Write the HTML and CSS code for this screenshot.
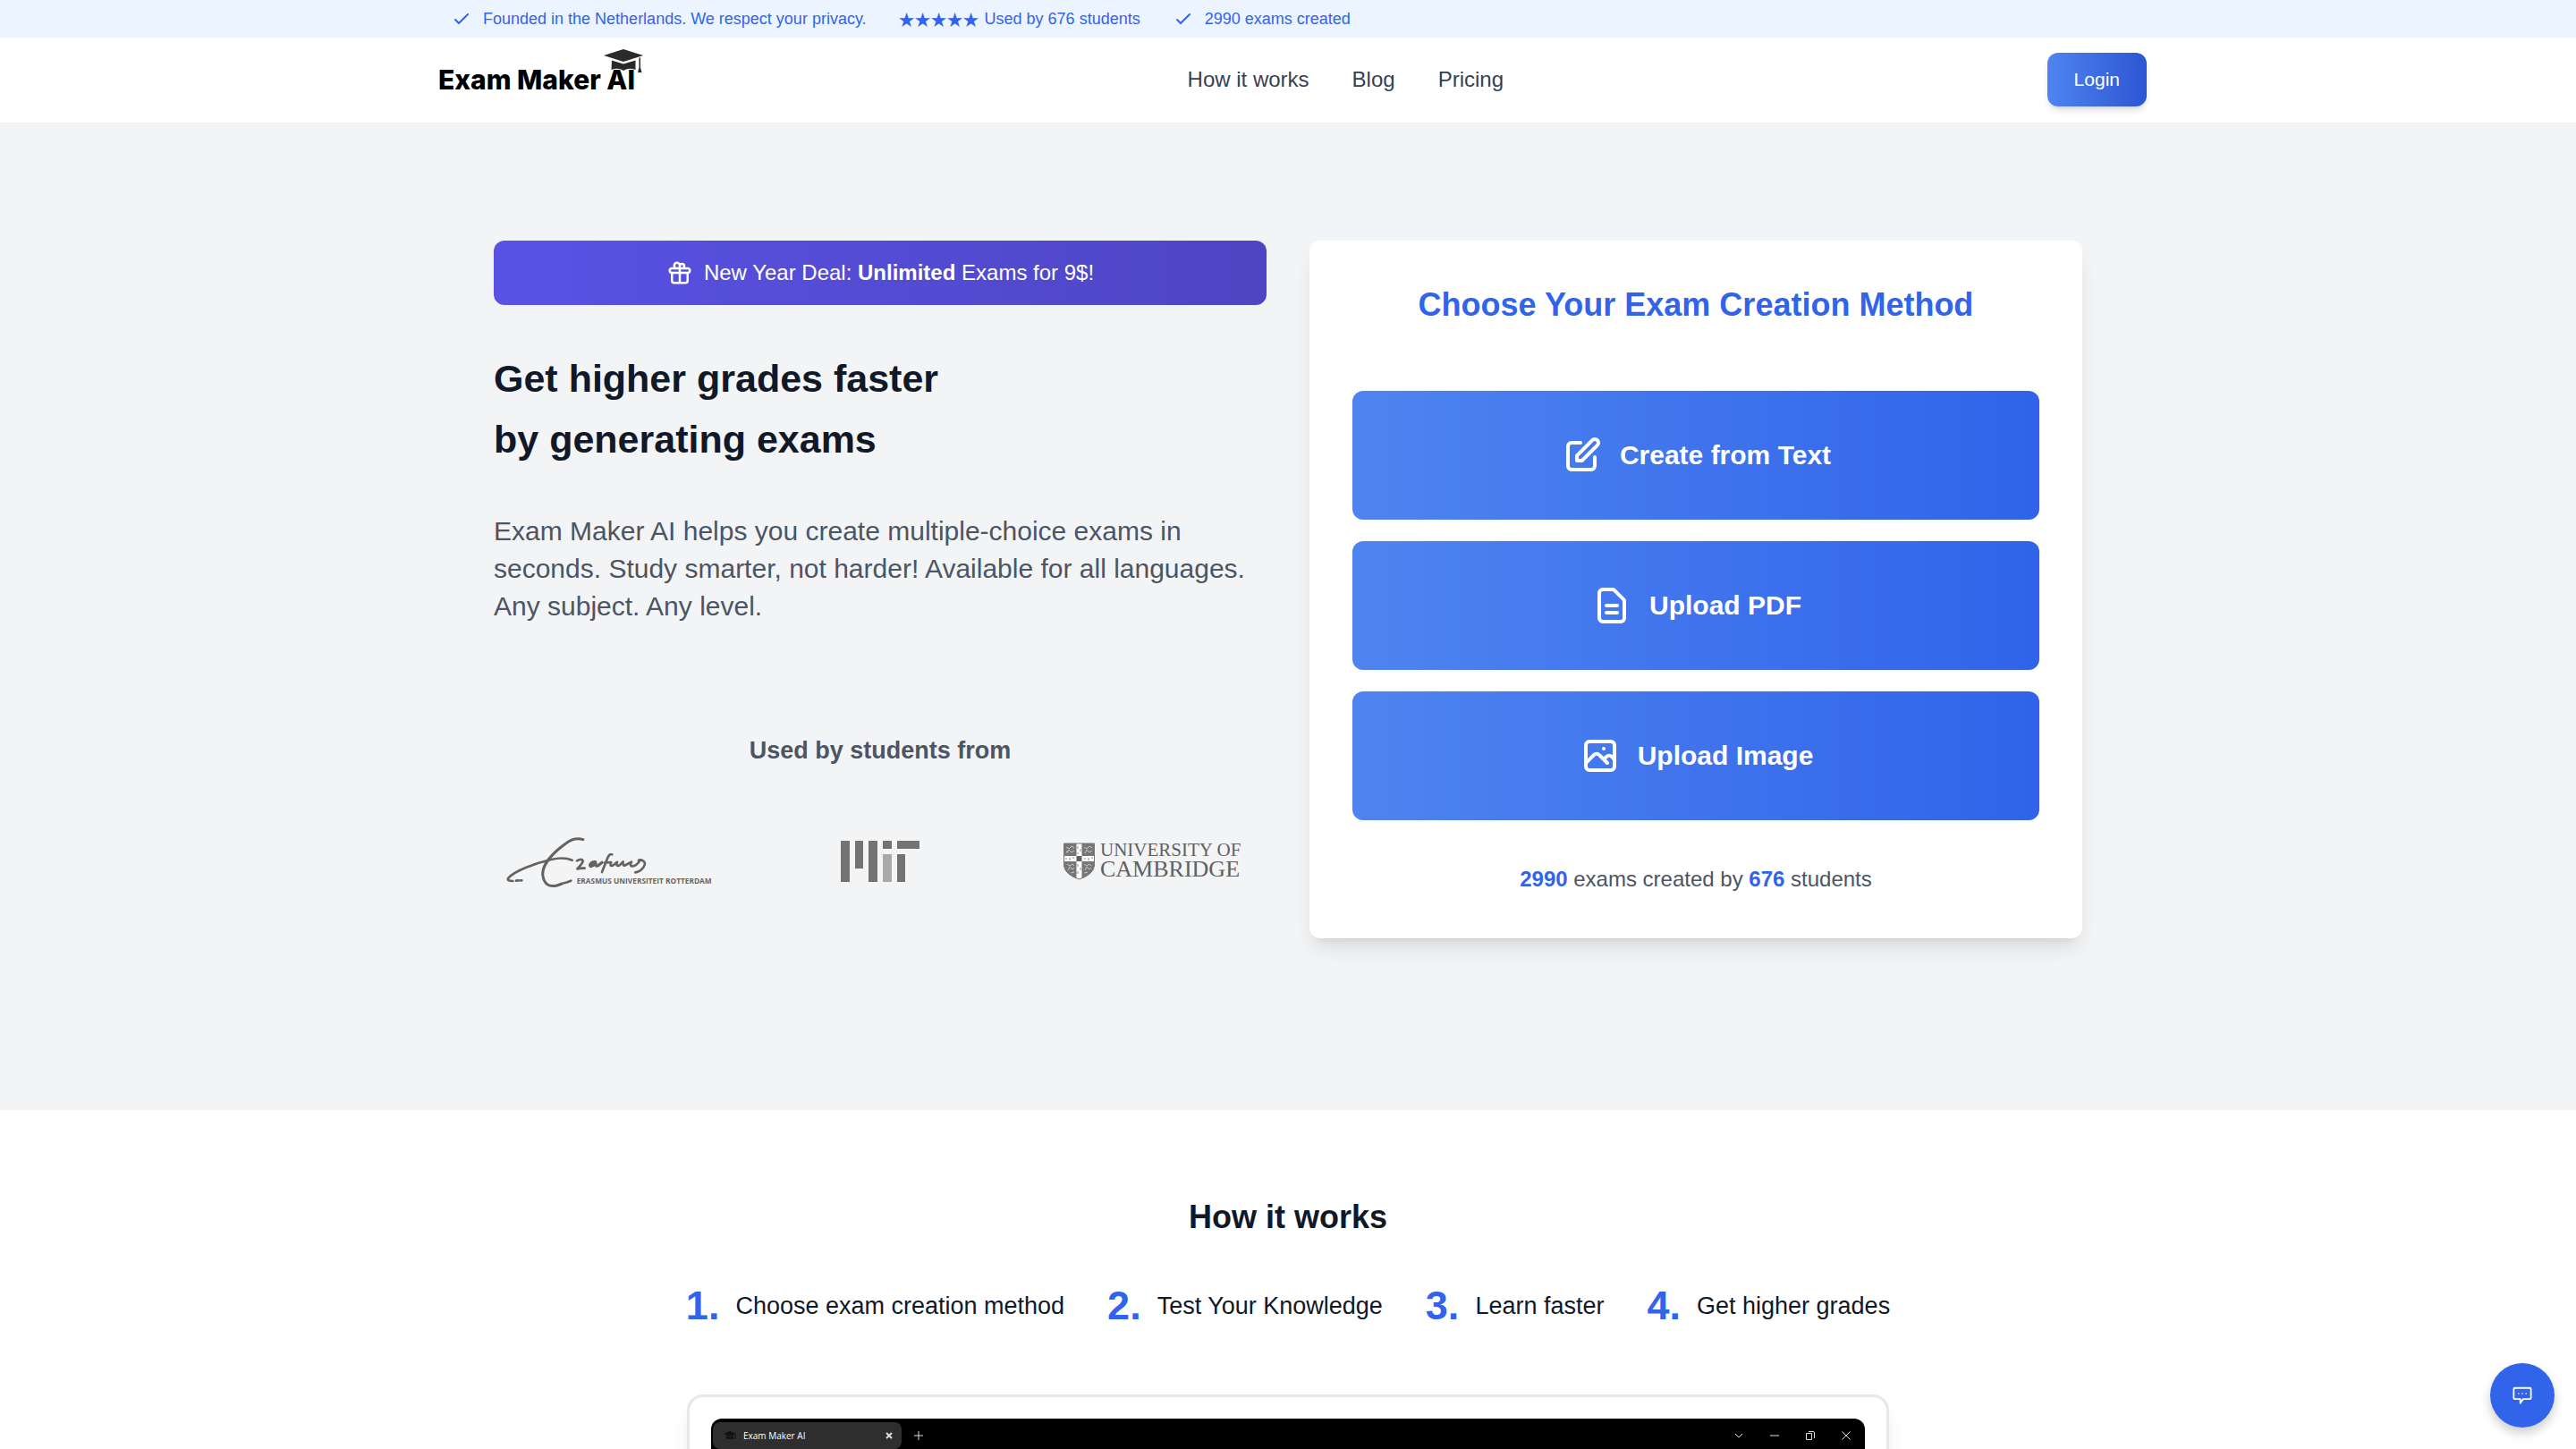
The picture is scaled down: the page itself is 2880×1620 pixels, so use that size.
FILE: index.html
```html
<!DOCTYPE html>
<html lang="en">

<head>
    <meta charset="UTF-8">
    <meta name="viewport" content="width=device-width, initial-scale=1.0">
    <title>Exam Maker AI</title>
    <link rel="stylesheet" href="styles.css">
</head>

<body>

    <div class="topbar">
        <ul class="container topbar-list">
            <li>
                <svg class="check" viewBox="0 0 24 24"><path d="M5 13l4 4L19 7" /></svg>
                Founded in the Netherlands. We respect your privacy.
            </li>
            <li class="rating"><span class="stars">★★★★★</span> Used by 676 students</li>
            <li>
                <svg class="check" viewBox="0 0 24 24"><path d="M5 13l4 4L19 7" /></svg>
                2990 exams created
            </li>
        </ul>
    </div>

    <header class="header">
        <div class="container header-row">
            <a class="logo" href="#">
                <svg viewBox="0 0 240 60" role="img" aria-label="Exam Maker AI">
                    <text x="10" y="41">Exam Maker AI</text>
                    <path class="logo-cap" d="M195 3 217 -4 239 3 217 10Z" />
                    <path class="logo-cap" d="M204 8.500 217 12.500 230.500 8.500V19Q223 16 217 20Q211 16 203.500 19Z" />
                    <path class="logo-cap" d="M234.500 5.500h1.500v11l1.500 5.500h-4.500l1.500-5.500z" />
                </svg>
            </a>
            <nav>
                <ul class="nav-list">
                    <li><a href="#how">How it works</a></li>
                    <li><a href="#">Blog</a></li>
                    <li><a href="#">Pricing</a></li>
                </ul>
            </nav>
            <button class="login" type="button">Login</button>
        </div>
    </header>

    <main>
        <section class="hero">
            <div class="container hero-grid">
                <div class="intro">
                    <a class="deal" href="#">
                        <svg class="deal-icon" viewBox="0 0 24 24"><path d="M12 8v13m0-13V6a2 2 0 112 2h-2zm0 0V5.500A2.500 2.500 0 109.500 8H12zm-7 4h14M5 12a2 2 0 110-4h14a2 2 0 110 4M5 12v7a2 2 0 002 2h10a2 2 0 002-2v-7" /></svg>
                        <span>New Year Deal: <strong>Unlimited</strong> Exams for 9$!</span>
                    </a>
                    <h1>Get higher grades faster<br>by generating exams</h1>
                    <p class="lead">Exam Maker AI helps you create multiple-choice exams in seconds. Study smarter, not harder! Available for all languages. Any subject. Any level.</p>
                    <h2 class="used-by">Used by students from</h2>
                    <div class="schools">
                        <!-- Erasmus -->
                        <svg class="erasmus" viewBox="9 24 702 180" role="img" aria-label="Erasmus Universiteit Rotterdam">
                            <g class="ink">
                                <path stroke-width="9" d="M276 41Q248 33 222 51C185 77 139 119 140 158Q146 205 188 195L205 189" />
                                <path stroke-width="8" d="M239 110Q211 98 168 108C113 121 45 146 25 170Q19 180 40 180M51 179l8-1M66 178l4 0M211 187l7-2M223 184l12-5" />
                                <path stroke-width="8" d="M255 112Q271 103 275 112Q276 119 256 139Q268 136 281 137" />
                                <path stroke-width="10" d="M317 116Q304 115 299 126Q299 137 318 121Q317 134 328 127L339 118" />
                                <path stroke-width="8" d="M339 150Q349 125 359 100Q366 87 373 91M348 119L370 117Q363 132 375 128L390 116Q384 132 397 128L410 115Q407 133 419 126L438 116Q430 132 442 130Q453 130 464 115Q457 107 473 110Q490 117 478 134Q467 149 451 151" />
                            </g>
                            <text x="254" y="189">ERASMUS UNIVERSITEIT ROTTERDAM</text>
                        </svg>
                        <!-- MIT -->
                        <svg class="mit" viewBox="0 0 88 46" role="img" aria-label="MIT">
                            <path d="M0 0h10v46H0zM16 0h9v31h-9zM31 0h10v46H31zM47 0h10v9H47zM63 0h25v9H63zM63 15h9v31h-9z" />
                            <path class="mit-light" d="M47 15h10v31H47z" />
                        </svg>
                        <!-- Cambridge -->
                        <svg class="cambridge" viewBox="-4 0 206 42" role="img" aria-label="University of Cambridge">
                            <path class="shield" d="M.500 1h34v25Q33 36 17.500 41Q2 36 .500 26Z" />
                            <path class="cross" d="M14.500 1h6v14h14v6h-14v19l-3 1-3-1V21H.500v-6h14z" />
                            <path d="M14.500 15h6v6h-6z" />
                            <path class="ermine" d="M16 4v3M19 7v3M16 11v2M16 24v3M19 28v3M16 32v3M3 17v2M7 17v3M11 16v2M24 17v2M28 17v3M32 16v2" />
                            <path class="lions" d="M3 5l3 2 3-3 3 2M4 12l2-4 3 3 3-2M3 10h2M23 5l3 2 3-3 3 2M24 12l2-4 3 3 3-2M4 24l3 2 3-2 2 2M5 31l2-4 3 3 2-2M8 34l4-1M23 24l3 2 3-2 2 2M24 31l2-4 3 3 2-2M23 34l4-1" />
                            <path class="outline" d="M.500 1h34v25Q33 36 17.500 41Q2 36 .500 26Z" />
                            <text class="cam-small" x="41" y="15">UNIVERSITY OF</text>
                            <text class="cam-big" x="41" y="38">CAMBRIDGE</text>
                        </svg>
                    </div>
                </div>

                <div class="card">
                    <h2>Choose Your Exam Creation Method</h2>
                    <div class="methods">
                        <button class="method" type="button">
                            <svg viewBox="0 0 24 24"><path d="M11 5H6a2 2 0 00-2 2v11a2 2 0 002 2h11a2 2 0 002-2v-5m-1.414-9.414a2 2 0 112.828 2.828L11.828 15H9v-2.828l8.586-8.586z" /></svg>
                            Create from Text
                        </button>
                        <button class="method" type="button">
                            <svg viewBox="0 0 24 24"><path d="M9 12h6m-6 4h6m2 5H7a2 2 0 01-2-2V5a2 2 0 012-2h5.586a1 1 0 01.707.293l5.414 5.414a1 1 0 01.293.707V19a2 2 0 01-2 2z" /></svg>
                            Upload PDF
                        </button>
                        <button class="method" type="button">
                            <svg viewBox="0 0 24 24"><path d="M4 16l4.586-4.586a2 2 0 012.828 0L16 16m-2-2l1.586-1.586a2 2 0 012.828 0L20 14m-6-6h.01M6 20h12a2 2 0 002-2V6a2 2 0 00-2-2H6a2 2 0 00-2 2v12a2 2 0 002 2z" /></svg>
                            Upload Image
                        </button>
                    </div>
                    <p class="stats"><strong>2990</strong> exams created by <strong>676</strong> students</p>
                </div>
            </div>
        </section>

        <section class="how" id="how">
            <h2>How it works</h2>
            <ol class="steps">
                <li><span class="num">1.</span>Choose exam creation method</li>
                <li><span class="num">2.</span>Test Your Knowledge</li>
                <li><span class="num">3.</span>Learn faster</li>
                <li><span class="num">4.</span>Get higher grades</li>
            </ol>
            <div class="frame">
                <div class="browser">
                    <div class="tabs">
                        <div class="tab">
                            <svg class="tab-cap" viewBox="0 0 14 10"><path d="M0 3 7 0l7 3-7 3zM3 5l4 2 4-2v4q-4-1-8 0zM12.500 4h1v5h-1z" /></svg>
                            <span class="tab-title">Exam Maker AI</span>
                            <svg class="tab-close" viewBox="0 0 8 8"><path d="M1 1l6 6M7 1L1 7" /></svg>
                        </div>
                        <svg class="tab-new" viewBox="0 0 10 10"><path d="M5 0v10M0 5h10" /></svg>
                        <div class="window-buttons">
                            <svg viewBox="0 0 10 10"><path d="M1 3l4 4 4-4" /></svg>
                            <svg viewBox="0 0 10 10"><path d="M0 5h10" /></svg>
                            <svg viewBox="0 0 10 10"><path d="M.500 2.500h6v7h-6zM3 .500h5q1.500 0 1.500 1.500v6" /></svg>
                            <svg viewBox="0 0 10 10"><path d="M.500 .500l9 9M9.500 .500l-9 9" /></svg>
                        </div>
                    </div>
                </div>
            </div>
        </section>
    </main>

    <button class="chat" type="button" aria-label="Chat">
        <svg viewBox="0 0 24 24"><path d="M3 3h18q1.500 0 1.500 1.500v10.500q0 1.500-1.500 1.500h-8l-3.500 5v-5H3q-1.500 0-1.500-1.500V4.500Q1.500 3 3 3zM7 9.800h1M11.500 9.800h1M16 9.800h1" /></svg>
    </button>

</body>

</html>
```
FILE: styles.css
```css
* {
    box-sizing: border-box;
}

body {
    margin: 0;
    font-family: "Liberation Sans", Arial, sans-serif;
    font-size: 24px;
    line-height: 36px;
    color: #111827;
    background-color: #fff;
}

h1,
h2,
p,
ul,
ol {
    margin: 0;
    padding: 0;
}

ul,
ol {
    list-style: none;
}

a {
    color: inherit;
    text-decoration: none;
}

button {
    font-family: inherit;
    color: #fff;
    border: none;
    cursor: pointer;
}

svg {
    display: block;
    flex-shrink: 0;
    overflow: visible;
}

.container {
    max-width: 1920px;
    margin: 0 auto;
}

/* Top bar */
.topbar {
    background-color: #ecf5ff;
    color: #3164eb;
}

.topbar-list {
    display: flex;
    align-items: center;
    gap: 36px;
    height: 42px;
    padding: 0 24px;
    font-size: 18px;
    line-height: 24px;
}

.topbar-list li {
    display: flex;
    align-items: center;
    gap: 12px;
}

.topbar-list .rating {
    gap: 6px;
}

.stars {
    font-family: "Noto Sans CJK JP", sans-serif;
}

.check {
    width: 24px;
    height: 24px;
    fill: none;
    stroke: currentColor;
    stroke-width: 2;
    stroke-linecap: round;
    stroke-linejoin: round;
}

/* Header */
.header {
    padding: 17px 0 18px;
    border-bottom: 1px solid #ebecee;
}

.header-row {
    display: flex;
    justify-content: space-between;
    align-items: center;
}

.logo svg {
    width: 240px;
    height: 60px;
    font-family: Inter, sans-serif;
    font-size: 30px;
    font-weight: 800;
    fill: #000;
}

.logo-cap {
    fill: #2a2a2a;
}

.nav-list {
    display: flex;
    gap: 48px;
    color: #374151;
}

.login {
    height: 60px;
    padding: 0 30px;
    border-radius: 12px;
    font-size: 21px;
    background: linear-gradient(to right, #4f84f0, #2c56d3);
    box-shadow: 0 6px 9px -2px rgba(0, 0, 0, 0.12), 0 3px 6px -3px rgba(0, 0, 0, 0.1);
}

/* Hero */
.hero {
    padding: 131px 0 192px;
    background-color: #f3f4f6;
}

.hero-grid {
    display: grid;
    grid-template-columns: 1fr 1fr;
    gap: 48px;
    padding: 0 72px;
}

.deal {
    display: flex;
    justify-content: center;
    align-items: center;
    gap: 12px;
    height: 72px;
    border-radius: 12px;
    color: #fff;
    background: linear-gradient(to right, #5952e4, #4e45c4);
}

.deal-icon {
    width: 30px;
    height: 30px;
    fill: none;
    stroke: currentColor;
    stroke-width: 2;
    stroke-linecap: round;
    stroke-linejoin: round;
}

h1 {
    margin-top: 48px;
    font-size: 43px;
    line-height: 68px;
}

.lead {
    margin-top: 48px;
    font-size: 30px;
    line-height: 42px;
    color: #4b5563;
}

.used-by {
    margin-top: 120px;
    font-size: 27px;
    line-height: 40px;
    text-align: center;
    color: #4b5563;
}

.schools {
    display: grid;
    grid-template-columns: repeat(3, 1fr);
    gap: 48px;
    place-items: center;
    margin-top: 74px;
    fill: #737373;
}

.erasmus {
    width: 234px;
    height: 60px;
    font-family: "Open Sans", sans-serif;
    font-size: 25px;
    font-weight: 700;
    fill: #666;
}

.ink {
    fill: none;
    stroke: #636363;
    stroke-linecap: round;
    stroke-linejoin: round;
}

.mit {
    width: 88px;
    height: 46px;
}

.mit-light {
    fill: #a8a9a9;
}

.cambridge {
    width: 206px;
    height: 42px;
    font-family: "Liberation Serif", serif;
    fill: #616161;
}

.shield {
    fill: #767676;
}

.cross {
    fill: #fff;
}

.outline {
    fill: none;
    stroke: #767676;
}

.ermine {
    stroke: #888;
}

.lions {
    fill: none;
    stroke: #c8c8c8;
}

.cam-small {
    font-size: 21px;
}

.cam-big {
    font-size: 26px;
}

/* Card with creation methods */
.card {
    padding: 48px;
    border-radius: 12px;
    text-align: center;
    background-color: #fff;
    box-shadow: 0 15px 23px -5px rgba(0, 0, 0, 0.1), 0 6px 9px -6px rgba(0, 0, 0, 0.1);
}

.card h2 {
    font-size: 36px;
    line-height: 48px;
    color: #3164eb;
}

.methods {
    display: flex;
    flex-direction: column;
    gap: 24px;
    margin: 72px 0 48px;
}

.method {
    display: flex;
    justify-content: center;
    align-items: center;
    gap: 18px;
    height: 144px;
    border-radius: 12px;
    font-size: 30px;
    font-weight: 700;
    background: linear-gradient(to right, #4f84f0, #3163ea);
}

.method svg {
    width: 48px;
    height: 48px;
    fill: none;
    stroke: currentColor;
    stroke-width: 2;
    stroke-linecap: round;
    stroke-linejoin: round;
}

.stats {
    color: #4b5563;
}

.stats strong {
    color: #3164eb;
}

/* How it works */
.how {
    padding: 96px 24px;
}

.how h2 {
    font-size: 36px;
    line-height: 48px;
    text-align: center;
}

.steps {
    display: flex;
    justify-content: center;
    gap: 48px;
    margin: 48px 0 72px;
    font-size: 27px;
}

.steps li {
    display: flex;
    align-items: center;
    gap: 18px;
}

.num {
    font-size: 45px;
    line-height: 54px;
    font-weight: 700;
    color: #3164eb;
}

.frame {
    max-width: 1344px;
    margin: 0 auto;
    padding: 24px;
    border: 3px solid #e5e7eb;
    border-radius: 18px;
    box-shadow: 0 15px 23px -5px rgba(0, 0, 0, 0.1), 0 6px 9px -6px rgba(0, 0, 0, 0.1);
}

.browser {
    aspect-ratio: 16 / 9;
    border-radius: 12px;
    background-color: #000;
    color: #fff;
}

.tabs {
    display: flex;
    align-items: center;
    padding: 4px 16px 0 2px;
    fill: none;
    stroke: #ddd;
}

.tab {
    display: flex;
    align-items: center;
    gap: 8px;
    width: 211px;
    height: 30px;
    padding: 0 10px 0 12px;
    border-radius: 8px;
    background-color: #2e2e2e;
}

.tab-cap {
    width: 14px;
    height: 10px;
    fill: #111;
    stroke: none;
}

.tab-title {
    flex: 1;
    font-family: "Open Sans", sans-serif;
    font-size: 10px;
    line-height: 16px;
}

.tab-close {
    width: 8px;
    height: 8px;
    stroke-width: 2;
}

.tab-new {
    width: 10px;
    height: 10px;
    margin-left: 14px;
}

.window-buttons {
    display: flex;
    gap: 30px;
    margin-left: auto;
}

.window-buttons svg {
    width: 10px;
    height: 10px;
}

/* Chat button */
.chat {
    position: fixed;
    right: 24px;
    bottom: 24px;
    display: flex;
    justify-content: center;
    align-items: center;
    width: 72px;
    height: 72px;
    border-radius: 50%;
    background-color: #3164eb;
    box-shadow: 0 6px 12px rgba(0, 0, 0, 0.2);
}

.chat svg {
    width: 22px;
    height: 22px;
    fill: none;
    stroke: currentColor;
    stroke-width: 2;
    stroke-linejoin: round;
}
```
